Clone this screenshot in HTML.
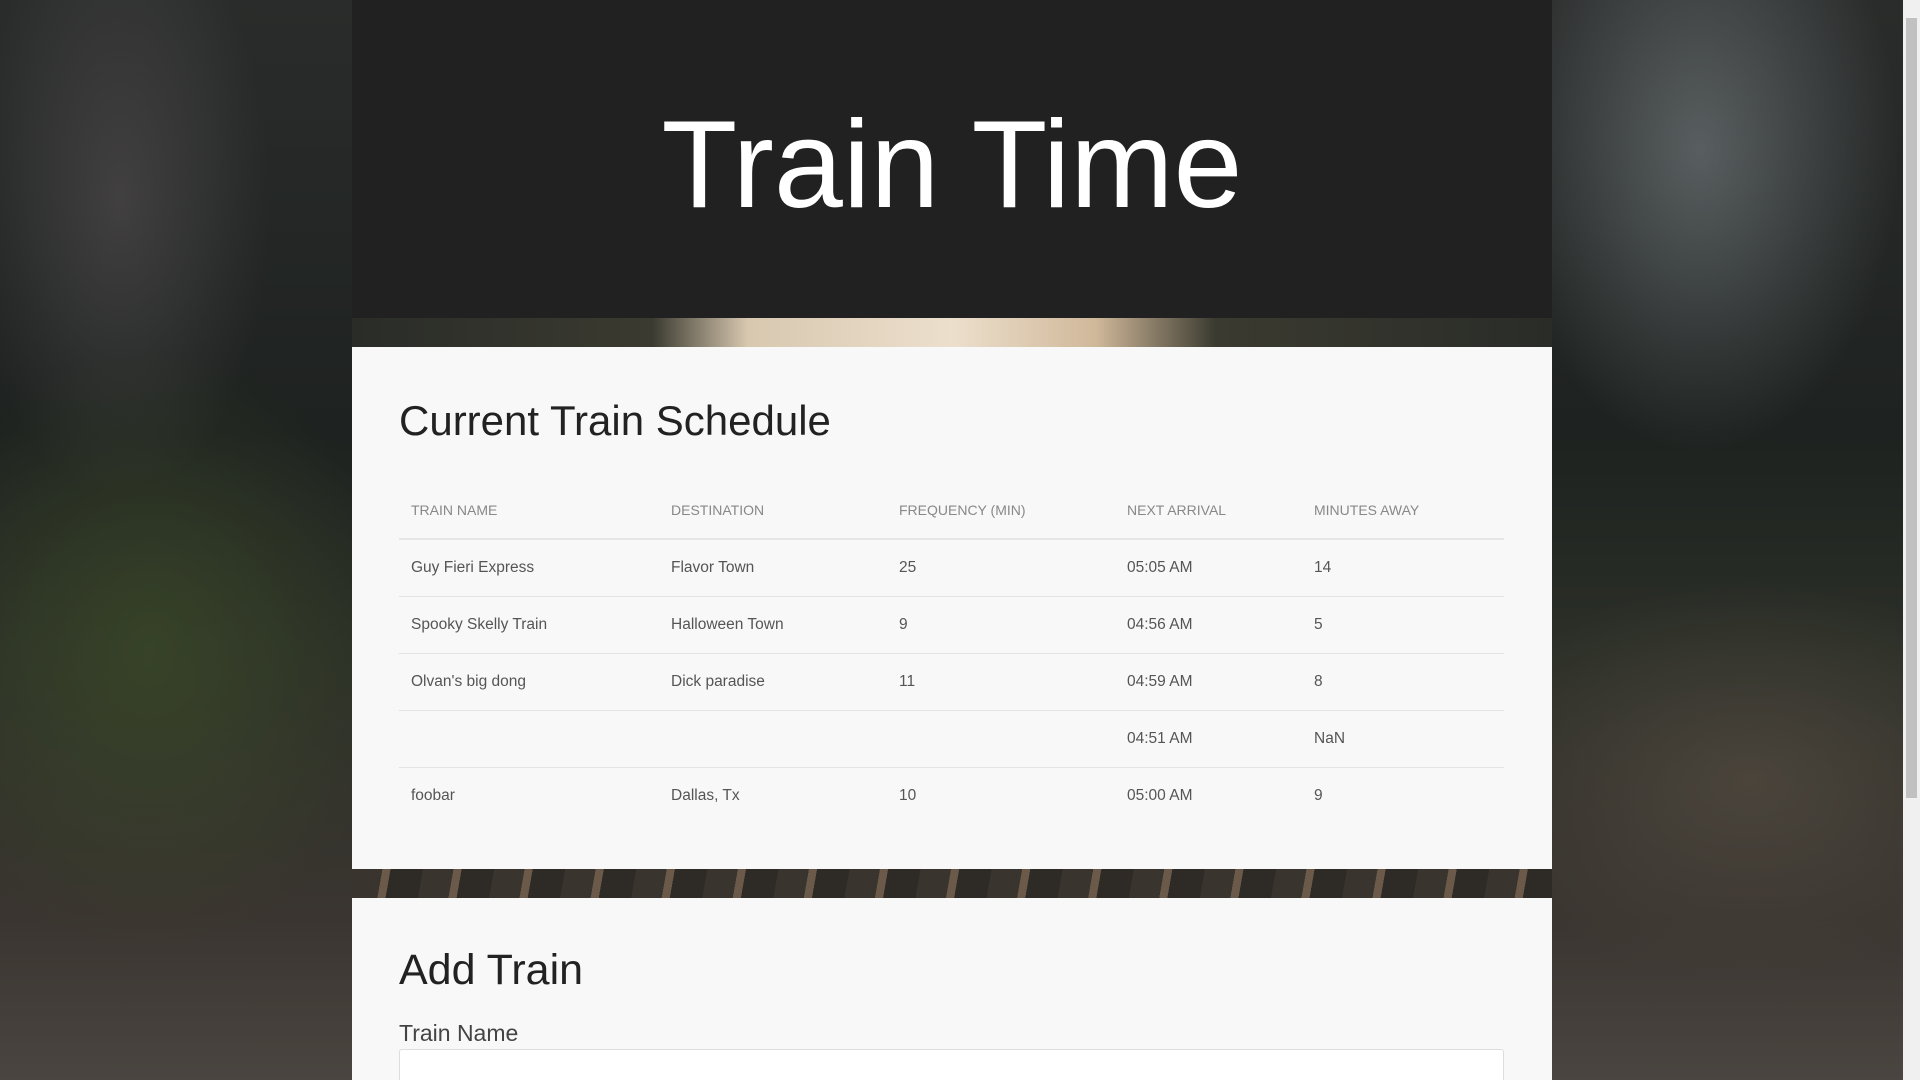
<!DOCTYPE html>
<html><head><meta charset="utf-8"><style>
html,body{margin:0;padding:0;}
body{width:1920px;height:1080px;overflow:hidden;position:relative;font-family:"Liberation Sans",sans-serif;
background:
radial-gradient(ellipse 300px 200px at 1750px 780px,rgba(90,80,70,.6),transparent),
radial-gradient(ellipse 250px 300px at 150px 650px,rgba(60,75,40,.7),transparent),
radial-gradient(ellipse 200px 300px at 1700px 150px,rgba(150,160,165,.45),transparent),
radial-gradient(ellipse 150px 300px at 120px 200px,rgba(120,110,115,.35),transparent),
linear-gradient(180deg,#2a2c2b 0%,#1e2220 40%,#2b2f27 60%,#3a3530 85%,#4a4540 100%);}
.sb{position:absolute;right:0;top:0;width:17px;height:1080px;background:#f0f0f0;}
.sb div{position:absolute;left:3px;top:18px;width:11px;height:780px;background:#c1c1c1;}
.hdr{position:absolute;left:352px;top:0;width:1200px;height:318px;background:#212121;color:#fff;text-align:center;font-size:124px;line-height:330px;}
.strip1{position:absolute;left:352px;top:318px;width:1200px;height:29px;background:linear-gradient(90deg,#2a2c28,#3a3a30 25%,#d8c8b0 33%,#ecdfcc 50%,#d0b89a 62%,#3a3a30 72%,#2a2c28);}
.strip2{position:absolute;left:352px;top:869px;width:1200px;height:29px;background:repeating-linear-gradient(100deg,#3a342e 0 30px,#6b5a4a 30px 38px,#2e2a25 38px 70px);}
.panel{position:absolute;left:352px;width:1200px;background:#f8f8f8;overflow:hidden;}
.p1{top:347px;height:522px;}
.p2{top:898px;height:182px;}
h2{margin:0;position:absolute;left:47px;font-weight:normal;color:#222;}
table{position:absolute;left:47px;top:135px;width:1105px;border-collapse:collapse;font-size:15.5px;color:#555;}
th{font-weight:normal;text-align:left;font-size:14px;color:#888;height:56px;padding:0 0 0 12px;border-bottom:2px solid #e6e6e6;}
td{height:56px;padding:0 0 0 12px;border-bottom:1px solid #e3e3e3;}
tr:last-child td{border-bottom:none;}
.inp{position:absolute;left:47px;top:151px;width:1105px;height:40px;box-sizing:border-box;border:1px solid #ddd;background:#fff;border-radius:3px;}
</style></head><body>
<div class="hdr">Train Time</div>
<div class="strip1"></div>
<div class="panel p1">
<h2 style="top:50px;font-size:42px;">Current Train Schedule</h2>
<table>
<tr><th style="width:248px">TRAIN NAME</th><th style="width:216px">DESTINATION</th><th style="width:216px">FREQUENCY (MIN)</th><th style="width:175px">NEXT ARRIVAL</th><th>MINUTES AWAY</th></tr>
<tr><td>Guy Fieri Express</td><td>Flavor Town</td><td>25</td><td>05:05 AM</td><td>14</td></tr>
<tr><td>Spooky Skelly Train</td><td>Halloween Town</td><td>9</td><td>04:56 AM</td><td>5</td></tr>
<tr><td>Olvan's big dong</td><td>Dick paradise</td><td>11</td><td>04:59 AM</td><td>8</td></tr>
<tr><td></td><td></td><td></td><td>04:51 AM</td><td>NaN</td></tr>
<tr><td>foobar</td><td>Dallas, Tx</td><td>10</td><td>05:00 AM</td><td>9</td></tr>
</table>
</div>
<div class="strip2"></div>
<div class="panel p2">
<h2 style="top:48px;font-size:43px;">Add Train</h2>
<div style="position:absolute;left:47px;top:122px;font-size:23px;color:#444;">Train Name</div>
<div class="inp"></div>
</div>
<div class="sb"><div></div></div>
</body></html>
